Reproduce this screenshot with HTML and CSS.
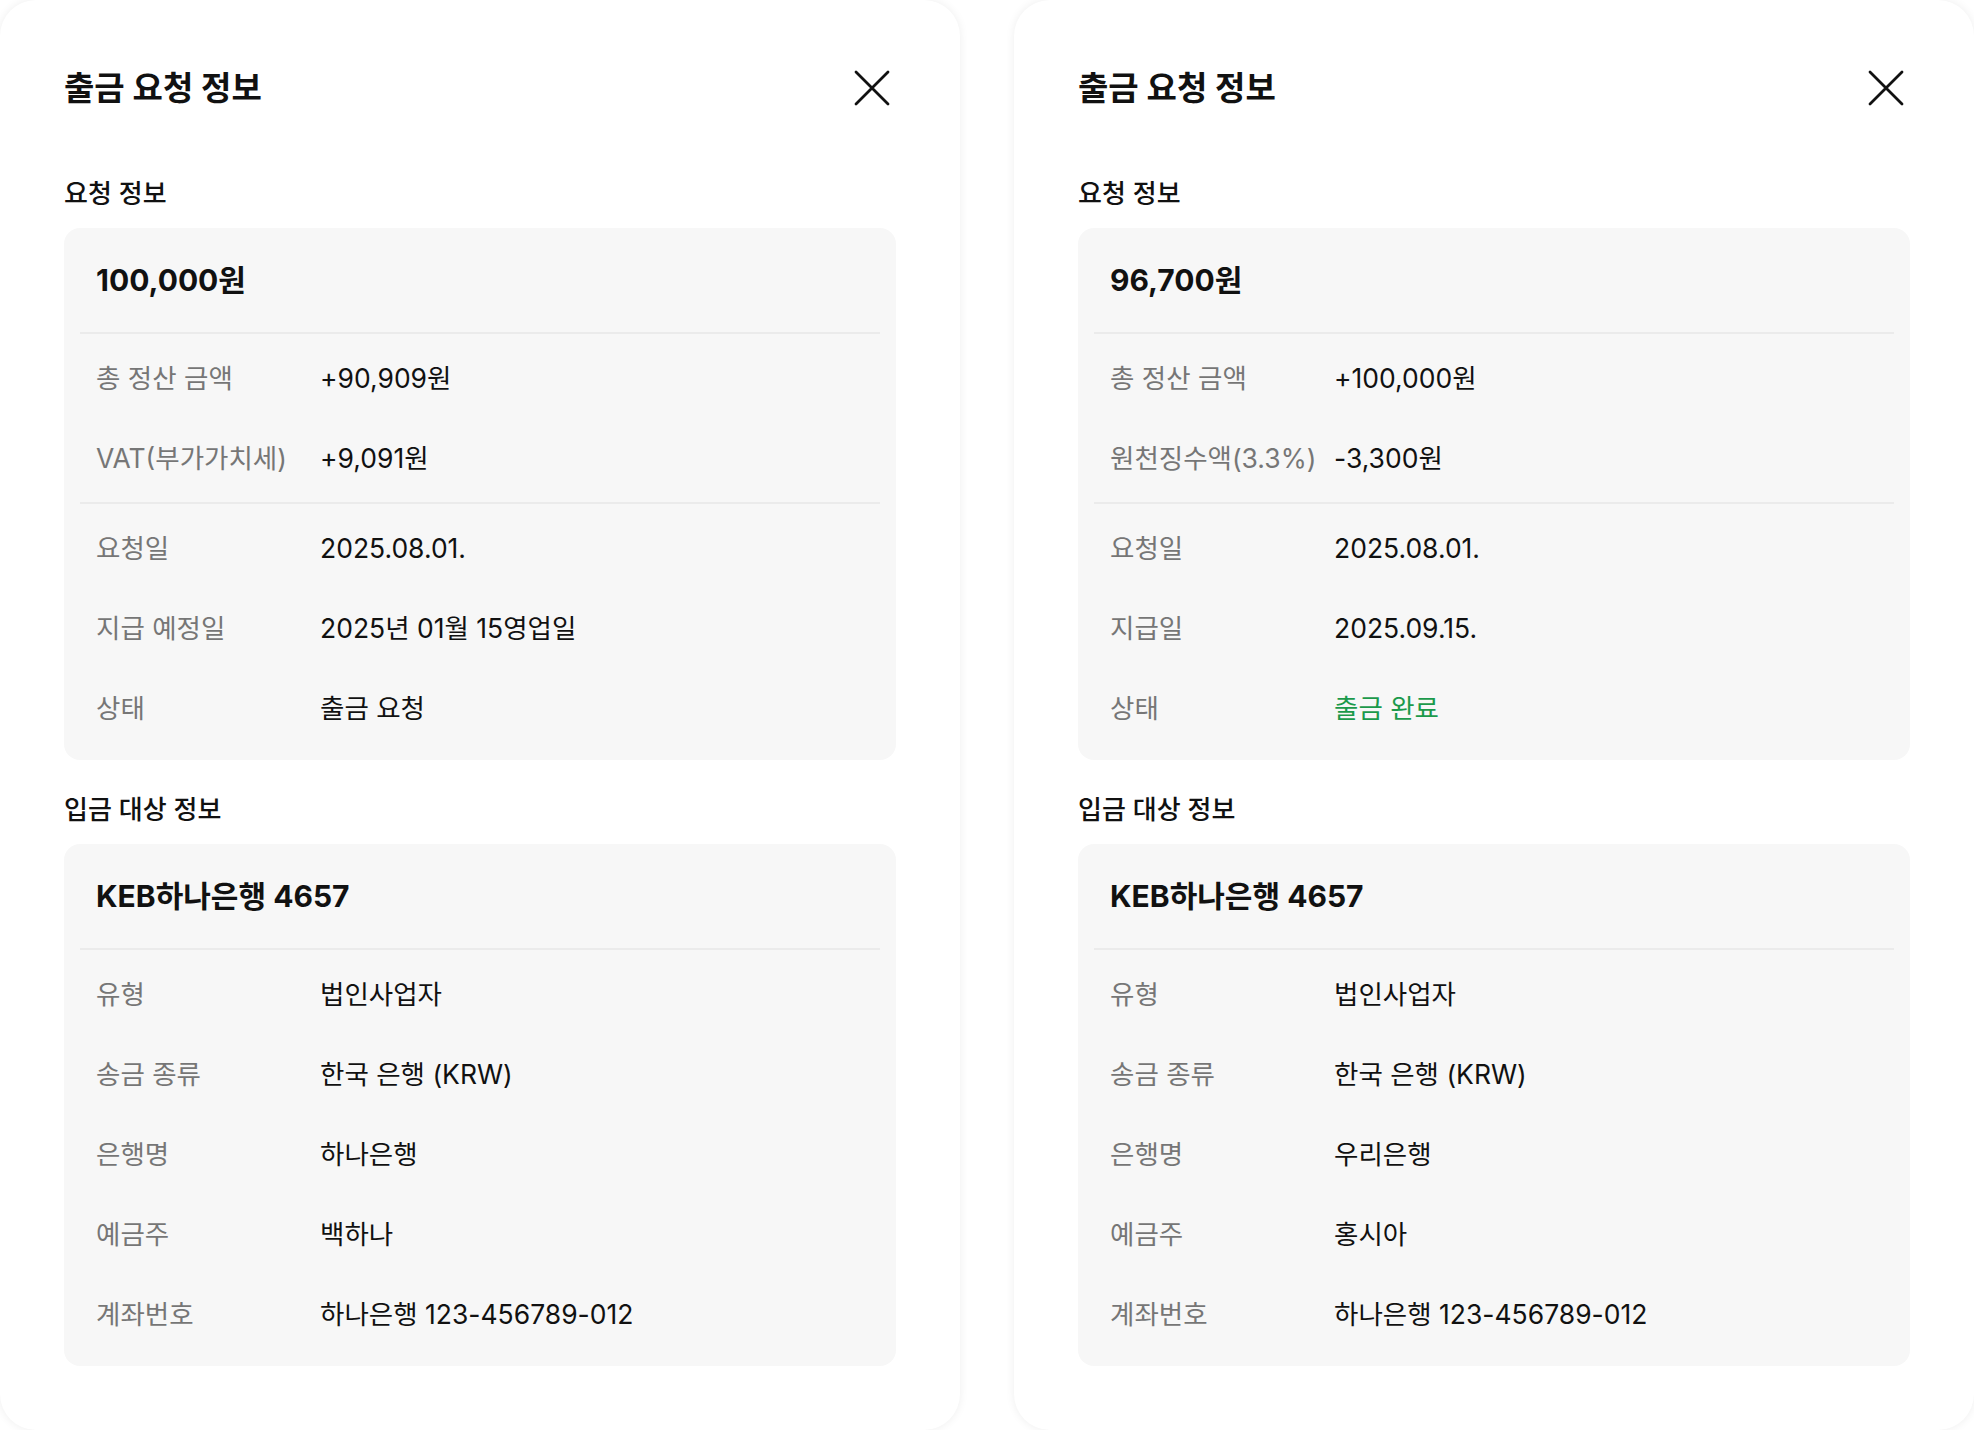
FILE: index.html
```html
<!DOCTYPE html>
<html lang="ko">
<head>
  <meta charset="UTF-8" />
  <meta name="viewport" content="width=device-width, initial-scale=1.0" />
  <title>출금 요청 정보</title>
  <link rel="stylesheet" href="styles.css">
</head>
<body>
  <!-- Panel: 출금 요청 (VAT) -->
  <div class="panel">
    <div class="panel-header">
      <h1>출금 요청 정보</h1>
      <button class="close-btn" aria-label="닫기">
        <svg width="40" height="40" viewBox="0 0 40 40"><path d="M4 4L36 36M36 4L4 36" stroke="#111" stroke-width="2.8" stroke-linecap="round" fill="none"/></svg>
      </button>
    </div>

    <section class="section">
      <h2>요청 정보</h2>
      <div class="card">
        <div class="card-title">100,000원</div>
        <div class="divider"></div>
        <div class="rows">
          <div class="row"><span class="label">총 정산 금액</span><span class="value">+90,909원</span></div>
          <div class="row"><span class="label">VAT(부가가치세)</span><span class="value">+9,091원</span></div>
        </div>
        <div class="divider"></div>
        <div class="rows">
          <div class="row"><span class="label">요청일</span><span class="value">2025.08.01.</span></div>
          <div class="row"><span class="label">지급 예정일</span><span class="value">2025년 01월 15영업일</span></div>
          <div class="row"><span class="label">상태</span><span class="value">출금 요청</span></div>
        </div>
      </div>
    </section>

    <section class="section">
      <h2>입금 대상 정보</h2>
      <div class="card">
        <div class="card-title">KEB하나은행 4657</div>
        <div class="divider"></div>
        <div class="rows">
          <div class="row"><span class="label">유형</span><span class="value">법인사업자</span></div>
          <div class="row"><span class="label">송금 종류</span><span class="value">한국 은행 (KRW)</span></div>
          <div class="row"><span class="label">은행명</span><span class="value">하나은행</span></div>
          <div class="row"><span class="label">예금주</span><span class="value">백하나</span></div>
          <div class="row"><span class="label">계좌번호</span><span class="value">하나은행 123-456789-012</span></div>
        </div>
      </div>
    </section>
  </div>

  <!-- Panel: 출금 완료 (원천징수) -->
  <div class="panel">
    <div class="panel-header">
      <h1>출금 요청 정보</h1>
      <button class="close-btn" aria-label="닫기">
        <svg width="40" height="40" viewBox="0 0 40 40"><path d="M4 4L36 36M36 4L4 36" stroke="#111" stroke-width="2.8" stroke-linecap="round" fill="none"/></svg>
      </button>
    </div>

    <section class="section">
      <h2>요청 정보</h2>
      <div class="card">
        <div class="card-title">96,700원</div>
        <div class="divider"></div>
        <div class="rows">
          <div class="row"><span class="label">총 정산 금액</span><span class="value">+100,000원</span></div>
          <div class="row"><span class="label">원천징수액(3.3%)</span><span class="value">-3,300원</span></div>
        </div>
        <div class="divider"></div>
        <div class="rows">
          <div class="row"><span class="label">요청일</span><span class="value">2025.08.01.</span></div>
          <div class="row"><span class="label">지급일</span><span class="value">2025.09.15.</span></div>
          <div class="row"><span class="label">상태</span><span class="value done">출금 완료</span></div>
        </div>
      </div>
    </section>

    <section class="section">
      <h2>입금 대상 정보</h2>
      <div class="card">
        <div class="card-title">KEB하나은행 4657</div>
        <div class="divider"></div>
        <div class="rows">
          <div class="row"><span class="label">유형</span><span class="value">법인사업자</span></div>
          <div class="row"><span class="label">송금 종류</span><span class="value">한국 은행 (KRW)</span></div>
          <div class="row"><span class="label">은행명</span><span class="value">우리은행</span></div>
          <div class="row"><span class="label">예금주</span><span class="value">홍시아</span></div>
          <div class="row"><span class="label">계좌번호</span><span class="value">하나은행 123-456789-012</span></div>
        </div>
      </div>
    </section>
  </div>
</body>
</html>
```

FILE: styles.css
```css
/* reset */
* {
  margin: 0;
  padding: 0;
  box-sizing: border-box;
}

body {
  font-family: Inter, 'Noto Sans CJK KR', sans-serif;
  background-color: #fff;
  color: #111;
  display: flex;
  gap: 54px;
  height: 1430px;
  overflow: hidden;
}

/* modal panel */
.panel {
  width: 960px;
  height: 1430px;
  flex-shrink: 0;
  background: #fff;
  border-radius: 36px;
  box-shadow: 0 0 10px rgba(0, 0, 0, 0.07);
  padding: 65px 64px 0 64px;
}

.panel-header {
  display: flex;
  justify-content: space-between;
  align-items: center;
  height: 46px;
}

.panel-header h1 {
  font-size: 33px;
  font-weight: 700;
  line-height: 46px;
}

.close-btn {
  background: none;
  border: none;
  width: 40px;
  height: 40px;
  margin-right: 4px;
  cursor: pointer;
}
.close-btn svg {
  display: block;
}

/* sections */
.section {
  margin-top: 67px;
}
.section + .section {
  margin-top: 34px;
}

.section h2 {
  font-size: 26px;
  font-weight: 500;
  line-height: 32px;
  margin-bottom: 18px;
}

.card {
  background: #f7f7f7;
  border-radius: 16px;
  padding-bottom: 8px;
}

.card-title {
  font-size: 30px;
  font-weight: 700;
  line-height: 40px;
  padding: 32px;
}

.divider {
  height: 2px;
  margin: 0 16px;
  background: #ebebeb;
}

.rows {
  padding: 4px 32px;
}

.row {
  display: grid;
  grid-template-columns: 224px 1fr;
  font-size: 26.5px;
  line-height: 32px;
  padding: 24px 0;
}

.label {
  color: #767676;
}
.value {
  color: #111;
}
.value.done {
  color: #1b9a4b;
}
```
